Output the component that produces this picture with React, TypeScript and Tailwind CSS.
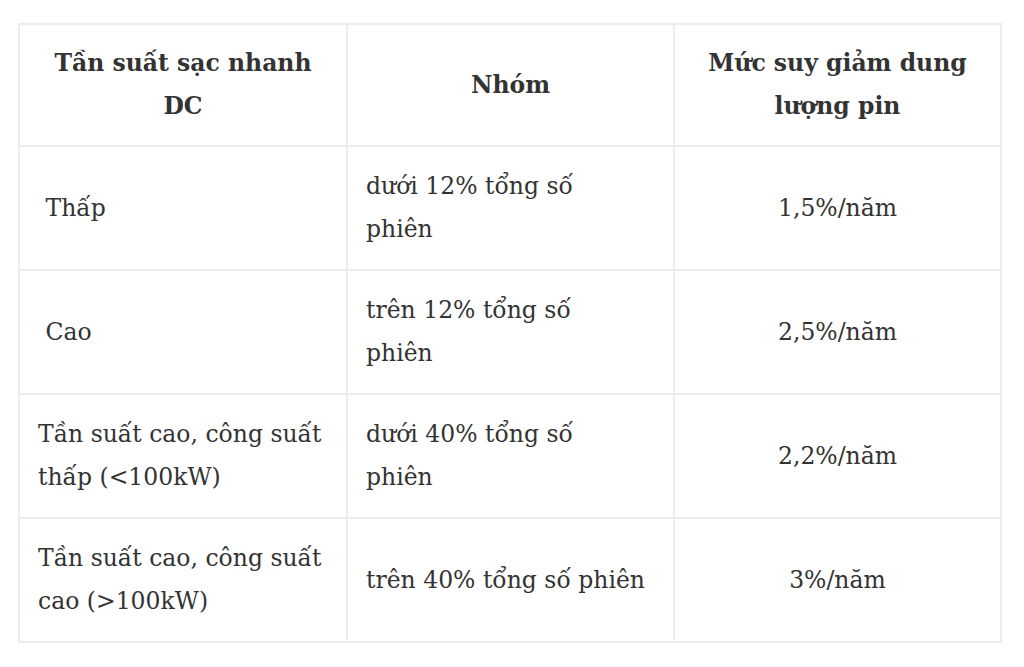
import React from "react";

type Row = { a: React.ReactNode; b: React.ReactNode; c: string };

const rows: Row[] = [
  { a: "\u00a0Thấp", b: <>dưới 12% tổng số<br />phiên</>, c: "1,5%/năm" },
  { a: "\u00a0Cao", b: <>trên 12% tổng số<br />phiên</>, c: "2,5%/năm" },
  { a: "Tần suất cao, công suất thấp (<100kW)", b: <>dưới 40% tổng số<br />phiên</>, c: "2,2%/năm" },
  { a: "Tần suất cao, công suất cao (>100kW)", b: "trên 40% tổng số phiên", c: "3%/năm" },
];

export default function App() {
  return (
    <div
      className="min-h-[667px] w-[1024px] bg-white pt-[23px] pl-[18px] text-[#333333]"
      style={{ fontFamily: '"DejaVu Serif", serif' }}
    >
      <table className="w-[982px] table-fixed border-collapse border-2 border-[#ededed] text-[23.5px] leading-[43px]">
        <colgroup>
          <col className="w-[328px]" />
          <col className="w-[327px]" />
          <col className="w-[327px]" />
        </colgroup>
        <thead>
          <tr>
            <th className="border-2 border-[#ededed] px-[18px] py-[17px] text-center align-middle font-bold">
              Tần suất sạc nhanh DC
            </th>
            <th className="border-2 border-[#ededed] px-[18px] py-[17px] text-center align-middle font-bold">
              Nhóm
            </th>
            <th className="border-2 border-[#ededed] px-[18px] py-[17px] text-center align-middle font-bold">
              Mức suy giảm dung lượng pin
            </th>
          </tr>
        </thead>
        <tbody>
          {rows.map((r, i) => (
            <tr key={i} className="h-[124px]">
              <td className="border-2 border-[#ededed] px-[18px] py-[18px] align-middle">{r.a}</td>
              <td className="border-2 border-[#ededed] px-[18px] py-[18px] align-middle">{r.b}</td>
              <td className="border-2 border-[#ededed] px-[18px] py-[18px] text-center align-middle">{r.c}</td>
            </tr>
          ))}
        </tbody>
      </table>
    </div>
  );
}
